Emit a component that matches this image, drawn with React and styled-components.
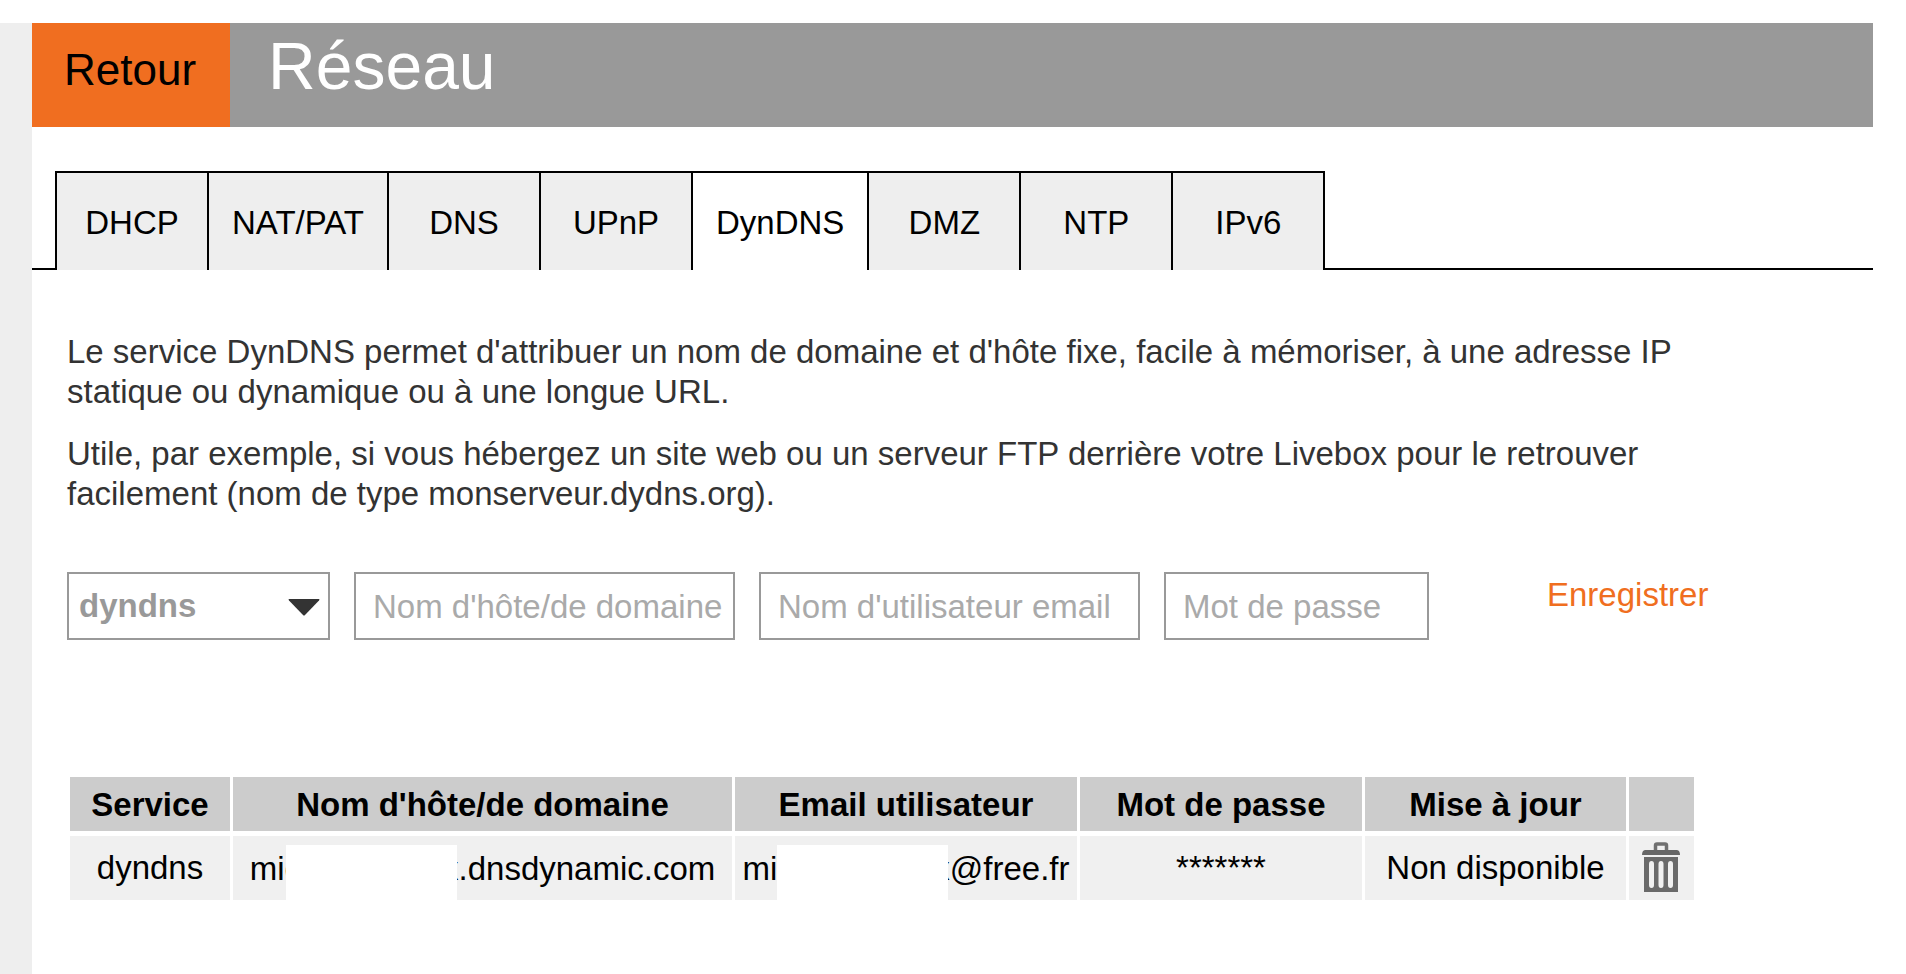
import React, { useState } from "react";
import styled, { createGlobalStyle } from "styled-components";

const GlobalStyle = createGlobalStyle`
  * {
    box-sizing: border-box;
  }

  body {
    margin: 0;
    background-color: #fff;
    color: #000;
    font-family: "Liberation Sans", Arial, Helvetica, sans-serif;
    font-size: 33px;
    line-height: 40px;
  }

  button,
  input,
  select {
    margin: 0;
    font: inherit;
  }
`;

const Page = styled.div`
  display: flex;
  min-height: 100vh;
  padding: 23px 33px 0 0;
`;

const Side = styled.aside`
  flex: 0 0 32px;
  background-color: #eee;
`;

const Main = styled.main`
  flex: 1;
  min-width: 0;
`;

const Header = styled.header`
  display: flex;
  height: 104px;
  background-color: #999;
`;

const BackButton = styled.button`
  display: flex;
  border: none;
  padding: 0 34px 0 32px;
  background-color: #f06e20;
  color: #000;
  font-size: 44px;
  line-height: 94px;
  cursor: pointer;
`;

const Title = styled.h1`
  margin: 0;
  padding-left: 38px;
  color: #fff;
  font-size: 66px;
  font-weight: 400;
  line-height: 86px;
`;

const TabBar = styled.div`
  display: flex;
  margin-top: 44px;

  &::before {
    content: "";
    width: 23px;
    border-bottom: 2px solid #000;
  }

  &::after {
    content: "";
    flex: 1;
    border-bottom: 2px solid #000;
    border-left: 2px solid #000;
  }
`;

const Tab = styled.button`
  min-width: 152px;
  height: 99px;
  border: solid #000;
  border-width: 2px 0 0 2px;
  padding: 3px 23px 0;
  background-color: ${({ $active }) => ($active ? "#fff" : "#eee")};
  color: #000;
  cursor: pointer;
`;

const Content = styled.section`
  padding: 62px 0 0 35px;
`;

const Text = styled.p`
  max-width: 1650px;
  margin: 0 0 22px;
  color: #333;
`;

const Form = styled.form`
  display: flex;
  align-items: flex-start;
  gap: 24px;
  margin-top: 58px;
`;

const SelectBox = styled.div`
  position: relative;
  flex: 0 1 263px;
`;

const Select = styled.select`
  display: block;
  width: 100%;
  height: 68px;
  border: 2px solid #999;
  border-radius: 0;
  padding: 0 50px 0 10px;
  background-color: #fff;
  color: #999;
  font-weight: 700;
  appearance: none;
`;

const Arrow = styled.svg`
  position: absolute;
  top: 27px;
  right: 10px;
  pointer-events: none;
`;

const Input = styled.input`
  flex: 0 1 ${({ $short }) => ($short ? "265px" : "381px")};
  min-width: 0;
  height: 68px;
  border: 2px solid #999;
  border-radius: 0;
  padding: 2px 0 0 17px;
  background-color: #fff;
  color: #333;
  outline: none;

  &::placeholder {
    color: #aaa;
    opacity: 1;
  }
`;

const SaveButton = styled.button`
  margin-left: 94px;
  border: none;
  padding: 0;
  background: none;
  color: #f06e20;
  line-height: 46px;
  cursor: pointer;
`;

const Table = styled.table`
  width: 100%;
  max-width: 1630px;
  margin-top: 132px;
  table-layout: fixed;
  border-collapse: separate;
  border-spacing: 3px 5px;
`;

const Col = styled.col`
  width: ${({ $width }) => $width}px;
`;

const Th = styled.th`
  height: 54px;
  padding: 2px 0 0;
  background-color: #ccc;
`;

const Td = styled.td`
  height: 63px;
  padding: 0;
  background-color: #f0f0f0;
  text-align: center;
  white-space: nowrap;
  line-height: 64px;
`;

const Hidden = styled.div`
  display: flex;
  justify-content: center;
  height: 63px;
`;

const Mask = styled.span`
  position: relative;
  align-self: flex-end;
  width: 171px;
  height: 55px;
  margin-right: -15px;
  margin-left: ${({ $overlap }) => ($overlap ? "-15px" : "0")};
  background-color: #fff;
`;

const DeleteButton = styled.button`
  display: block;
  margin: 0 auto;
  border: none;
  padding: 0 2px 3px 0;
  background: none;
  cursor: pointer;

  svg {
    display: block;
  }
`;

const tabs = ["DHCP", "NAT/PAT", "DNS", "UPnP", "DynDNS", "DMZ", "NTP", "IPv6"];

const columns = [
  { label: "Service", width: 160 },
  { label: "Nom d'hôte/de domaine", width: 499 },
  { label: "Email utilisateur", width: 342 },
  { label: "Mot de passe", width: 282 },
  { label: "Mise à jour", width: 261 },
  { label: "", width: 65 },
];

const TrashIcon = () => (
  <svg width="38" height="50" viewBox="0 0 38 50" aria-hidden="true">
    <path d="M13.500 9V3.500q0-1.500 1.500-1.500h8q1.500 0 1.500 1.500V9" fill="none" stroke="#707070" strokeWidth="3.500" />
    <path d="M3 8h32q3 .5 3 5H0q0-4.500 3-5z" fill="#666" />
    <path
      d="M2 15h34v35H2zM7 22v21q0 3 2.500 3t2.500-3V22q0-3-2.500-3T7 22zM16.500 22v21q0 3 2.500 3t2.500-3V22q0-3-2.500-3t-2.500 3zM26 22v21q0 3 2.500 3t2.500-3V22q0-3-2.500-3T26 22z"
      fill="#6a6a6a"
      fillRule="evenodd"
    />
  </svg>
);

const App = () => {
  const [activeTab, setActiveTab] = useState("DynDNS");
  const [input, setInput] = useState({
    service: "dyndns",
    host: "",
    email: "",
    password: "",
  });

  const handleChange = (e) => {
    setInput((prev) => ({
      ...prev,
      [e.target.name]: e.target.value,
    }));
  };

  return (
    <>
      <GlobalStyle />
      <Page>
        <Side />
        <Main>
          <Header>
            <BackButton type="button">Retour</BackButton>
            <Title>Réseau</Title>
          </Header>

          <TabBar role="tablist">
            {tabs.map((tab) => (
              <Tab
                key={tab}
                type="button"
                role="tab"
                aria-selected={tab === activeTab}
                $active={tab === activeTab}
                onClick={() => setActiveTab(tab)}
              >
                {tab}
              </Tab>
            ))}
          </TabBar>

          <Content>
            <Text>
              Le service DynDNS permet d'attribuer un nom de domaine et d'hôte fixe, facile à
              mémoriser, à une adresse IP statique ou dynamique ou à une longue URL.
            </Text>
            <Text>
              Utile, par exemple, si vous hébergez un site web ou un serveur FTP derrière votre
              Livebox pour le retrouver facilement (nom de type monserveur.dydns.org).
            </Text>

            <Form onSubmit={(e) => e.preventDefault()}>
              <SelectBox>
                <Select
                  name="service"
                  aria-label="Service"
                  value={input.service}
                  onChange={handleChange}
                >
                  <option value="dyndns">dyndns</option>
                </Select>
                <Arrow width="32" height="17" viewBox="0 0 32 17" aria-hidden="true">
                  <path d="M1 0h30q1 0 0 1.500L17 16q-1 1-2 0L1 1.500Q0 0 1 0z" fill="#333" />
                </Arrow>
              </SelectBox>
              <Input
                type="text"
                name="host"
                aria-label="Nom d'hôte/de domaine"
                placeholder="Nom d'hôte/de domaine"
                value={input.host}
                onChange={handleChange}
              />
              <Input
                type="text"
                name="email"
                aria-label="Nom d'utilisateur email"
                placeholder="Nom d'utilisateur email"
                value={input.email}
                onChange={handleChange}
              />
              <Input
                $short
                type="password"
                name="password"
                aria-label="Mot de passe"
                placeholder="Mot de passe"
                value={input.password}
                onChange={handleChange}
              />
              <SaveButton type="submit">Enregistrer</SaveButton>
            </Form>

            <Table>
              <colgroup>
                {columns.map((column) => (
                  <Col key={column.label} $width={column.width} />
                ))}
              </colgroup>
              <thead>
                <tr>
                  {columns.map((column) => (
                    <Th key={column.label} scope="col">
                      {column.label}
                    </Th>
                  ))}
                </tr>
              </thead>
              <tbody>
                <tr>
                  <Td>dyndns</Td>
                  <Td>
                    <Hidden>
                      mic
                      <Mask $overlap />
                      x.dnsdynamic.com
                    </Hidden>
                  </Td>
                  <Td>
                    <Hidden>
                      mi
                      <Mask />
                      x@free.fr
                    </Hidden>
                  </Td>
                  <Td>*******</Td>
                  <Td>Non disponible</Td>
                  <Td>
                    <DeleteButton type="button" aria-label="Supprimer">
                      <TrashIcon />
                    </DeleteButton>
                  </Td>
                </tr>
              </tbody>
            </Table>
          </Content>
        </Main>
      </Page>
    </>
  );
};

export default App;
